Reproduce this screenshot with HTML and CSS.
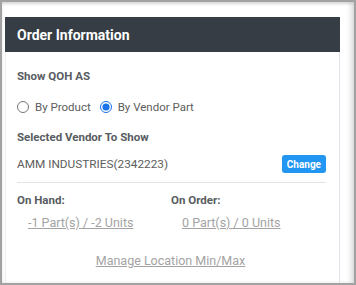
FILE: index.html
```html
<!DOCTYPE html>
<html lang="en">

<head>
  <meta charset="UTF-8">
  <meta name="viewport" content="width=device-width, initial-scale=1.0">
  <title>Order Information</title>
  <link rel="stylesheet" href="styles.css">
</head>

<body>
  <div class="window">
    <div class="panel">
      <!-- 标题栏 -->
      <div class="panel-header">Order Information</div>

      <div class="panel-body">
        <div class="label">Show QOH AS</div>
        <div class="radio-row">
          <label class="radio">
            <input type="radio" name="qoh">
            <span>By Product</span>
          </label>
          <label class="radio">
            <input type="radio" name="qoh" checked>
            <span>By Vendor Part</span>
          </label>
        </div>

        <div class="label">Selected Vendor To Show</div>
        <div class="vendor-row">
          <span class="vendor">AMM INDUSTRIES(2342223)</span>
          <button class="btn-change">Change</button>
        </div>

        <div class="stock">
          <div class="stock-col">
            <div class="label">On Hand:</div>
            <a class="link" href="#">-1 Part(s) / -2 Units</a>
          </div>
          <div class="stock-col">
            <div class="label">On Order:</div>
            <a class="link" href="#">0 Part(s) / 0 Units</a>
          </div>
        </div>

        <div class="manage">
          <a class="link" href="#">Manage Location Min/Max</a>
        </div>
      </div>
    </div>
  </div>
</body>

</html>
```

FILE: styles.css
```css
/* 整体布局 */
body {
  margin: 0;
  font-family: Roboto, "Liberation Sans", sans-serif;
  background-color: #fff;
}

.window {
  box-sizing: border-box;
  width: 356px;
  height: 285px;
  border: 2px solid #a2a2a2;
  padding: 15px 14px 0 3px;
  background-color: #fff;
  box-shadow: inset 0 2px 3px rgba(0, 0, 0, 0.12), inset -4px 0 4px rgba(0, 0, 0, 0.1);
  overflow: hidden;
}

/* 面板 */
.panel {
  height: 100%;
  border-right: 1px solid #e2e2ea;
  border-left: 1px solid #ececf0;
}

.panel-header {
  height: 35px;
  line-height: 36px;
  padding: 0 12px;
  margin-left: -1px;
  margin-right: -1px;
  background-color: #363d44;
  color: #fff;
  font-size: 14px;
  font-weight: 700;
}

.panel-body {
  padding: 16px 13px 0 11px;
}

.label {
  font-size: 11.5px;
  font-weight: 700;
  color: #575c61;
  line-height: 16px;
}

/* 单选按钮 */
.radio-row {
  display: flex;
  align-items: center;
  gap: 9px;
  margin: 15px 0 14px;
  height: 16px;
}

.radio {
  display: flex;
  align-items: center;
  gap: 6px;
  font-size: 11.5px;
  color: #5d5d5d;
}

.radio input {
  margin: 0;
  width: 12px;
  height: 12px;
  accent-color: #1a73e8;
}

/* 供应商 */
.vendor-row {
  display: flex;
  align-items: center;
  justify-content: space-between;
  margin-top: 10px;
  padding-bottom: 9px;
  border-bottom: 1px solid #e4e4e8;
}

.vendor {
  font-size: 11.8px;
  color: #5d5d5d;
}

.btn-change {
  height: 18px;
  padding: 0 5px;
  border: none;
  border-radius: 3px;
  background-color: #2196f3;
  color: #fff;
  font-family: Roboto, "Liberation Sans", sans-serif;
  font-size: 10px;
  font-weight: 700;
  cursor: pointer;
}

/* 库存 */
.stock {
  display: flex;
  margin-top: 9px;
}

.stock-col {
  width: 154px;
}

.stock-col .link {
  display: inline-block;
  margin: 7px 0 0 11px;
}

.link {
  font-size: 12.5px;
  color: #a3a3a3;
  text-decoration: underline;
}

.manage {
  text-align: center;
  margin-top: 19px;
  padding-right: 2px;
}
```
